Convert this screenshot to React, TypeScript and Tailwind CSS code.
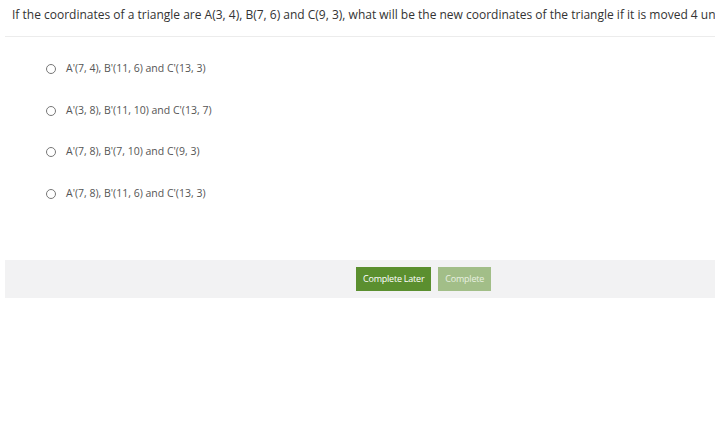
import React from 'react';

const options = [
  "A'(7, 4), B'(11, 6) and C'(13, 3)",
  "A'(3, 8), B'(11, 10) and C'(13, 7)",
  "A'(7, 8), B'(7, 10) and C'(9, 3)",
  "A'(7, 8), B'(11, 6) and C'(13, 3)",
];

export default function App() {
  return (
    <div className="w-[715px] h-[433px] bg-white overflow-hidden" style={{ fontFamily: '"Open Sans", sans-serif' }}>
      <div className="pl-[5px]">
        <div className="h-[37px] border-b border-[#ececec] pl-[7px] pt-[6px] text-[12px] text-[#333] whitespace-nowrap overflow-hidden">
          If the coordinates of a triangle are A(3, 4), B(7, 6) and C(9, 3), what will be the new coordinates of the triangle if it is moved 4 units up?
        </div>
        <div className="pl-[41px] pt-[23px] flex flex-col gap-[24px]">
          {options.map((o) => (
            <label key={o} className="flex items-center h-[17.7px] text-[10.5px] text-[#555]">
              <span className="w-[10px] h-[10px] rounded-full border border-[#777] bg-white" />
              <span className="ml-[10px]">{o}</span>
            </label>
          ))}
        </div>
        <div className="mt-[57px] h-[38px] bg-[#f2f2f3] flex items-center pl-[351px] gap-[7px]">
          <button className="h-[24px] px-[7px] bg-[#5b8f2f] text-white text-[9px] tracking-tight">Complete Later</button>
          <button className="h-[24px] px-[7px] bg-[#a2be88] text-[#e8f0e0] text-[9px] tracking-tight">Complete</button>
        </div>
      </div>
    </div>
  );
}
